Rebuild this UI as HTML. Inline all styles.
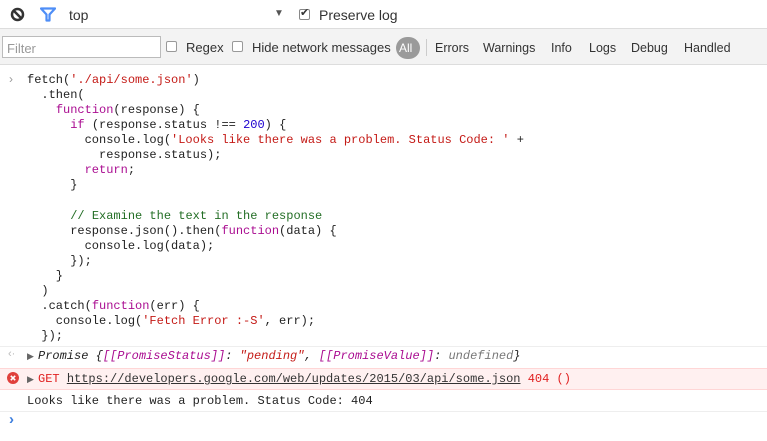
<!DOCTYPE html>
<html><head><meta charset="utf-8"><style>
*{margin:0;padding:0;box-sizing:border-box}
body{width:767px;height:441px;background:#fff;font-family:"Liberation Sans",sans-serif;font-size:13px;color:#333;position:relative;overflow:hidden}
.abs{position:absolute}
#tb1{left:0;top:0;width:767px;height:29px;background:#fff;border-bottom:1px solid #ddd}
#tb2{left:0;top:29px;width:767px;height:36px;background:#f3f3f3;border-bottom:1px solid #ddd}
.t{position:absolute;white-space:nowrap;font-size:13px;color:#333}
.cb{position:absolute;width:11px;height:11px;border:1px solid #999;border-radius:2px;background:#fff}
pre{position:absolute;font-family:"Liberation Mono",monospace;font-size:12px;line-height:15.06px;color:#222;white-space:pre}
.s{color:#c41a16}.k{color:#aa0d91}.n{color:#1c00cf}.c{color:#236e25}
</style></head><body>
<div id="tb1" class="abs"></div>
<svg class="abs" style="left:10px;top:7px" width="15" height="15" viewBox="0 0 15 15"><circle cx="7.5" cy="7.5" r="5.5" fill="none" stroke="#333" stroke-width="2.5"/><line x1="3.8" y1="3.8" x2="11.2" y2="11.2" stroke="#333" stroke-width="2.5"/></svg>
<svg class="abs" style="left:40px;top:7px" width="16" height="15" viewBox="0 0 16 15"><path d="M1 1.5H15L9.5 7.5V13.5H6.5V7.5Z" fill="none" stroke="#4e8ef7" stroke-width="2.2" stroke-linejoin="round"/></svg>
<div class="t" style="left:69px;top:7px;font-size:14px">top</div>
<div class="t" style="left:274px;top:8px;font-size:10px;color:#555">▼</div>
<div class="cb" style="left:299px;top:9px;border-color:#888"></div>
<div class="t" style="left:300px;top:6px;font-size:11px;color:#333">✔</div>
<div class="t" style="left:319px;top:7px;font-size:14px">Preserve log</div>

<div id="tb2" class="abs"></div>
<div class="abs" style="left:2px;top:36px;width:159px;height:22px;background:#fff;border:1px solid #bbb"></div>
<div class="t" style="left:7px;top:41px;color:#999;font-size:13px">Filter</div>
<div class="cb" style="left:166px;top:41px"></div>
<div class="t" style="left:186px;top:40px">Regex</div>
<div class="cb" style="left:232px;top:41px"></div>
<div class="t" style="left:252px;top:40px">Hide network messages</div>
<div class="abs" style="left:396px;top:37px;width:24px;height:22px;border-radius:11px;background:#9a9a9a"></div>
<div class="t" style="left:399px;top:41px;color:#fff;font-size:12px">All</div>
<div class="abs" style="left:426px;top:39px;width:1px;height:17px;background:#ccc"></div>
<div class="t" style="left:435px;top:41px;font-size:12.5px">Errors</div>
<div class="t" style="left:483px;top:41px;font-size:12.5px">Warnings</div>
<div class="t" style="left:551px;top:41px;font-size:12.5px">Info</div>
<div class="t" style="left:589px;top:41px;font-size:12.5px">Logs</div>
<div class="t" style="left:631px;top:41px;font-size:12.5px">Debug</div>
<div class="t" style="left:684px;top:41px;font-size:12.5px">Handled</div>

<div class="t" style="left:9px;top:72px;color:#999;font-size:12px">›</div>
<pre style="left:27px;top:73px">fetch(<span class="s">'./api/some.json'</span>)
  .then(
    <span class="k">function</span>(response) {
      <span class="k">if</span> (response.status !== <span class="n">200</span>) {
        console.log(<span class="s">'Looks like there was a problem. Status Code: '</span> +
          response.status);
        <span class="k">return</span>;
      }

      <span class="c">// Examine the text in the response</span>
      response.json().then(<span class="k">function</span>(data) {
        console.log(data);
      });
    }
  )
  .catch(<span class="k">function</span>(err) {
    console.log(<span class="s">'Fetch Error :-S'</span>, err);
  });</pre>
<div class="abs" style="left:0;top:346px;width:767px;height:1px;background:#eee"></div>
<div class="t" style="left:8px;top:348px;color:#bbb;font-size:11px">‹·</div>
<div class="t" style="left:27px;top:351px;color:#666;font-size:9px">▶</div>
<pre style="left:38px;top:349px;font-style:italic">Promise {<span class="k">[[PromiseStatus]]</span>: <span class="s">"pending"</span>, <span class="k">[[PromiseValue]]</span>: <span style="color:#777">undefined</span>}</pre>
<div class="abs" style="left:0;top:368px;width:767px;height:22px;background:#fff0f0;border-top:1px solid #ffd6d6;border-bottom:1px solid #ffd6d6"></div>
<svg class="abs" style="left:7px;top:372px" width="12" height="12" viewBox="0 0 12 12"><circle cx="6" cy="6" r="6" fill="#e0403c"/><path d="M3.8 3.8L8.2 8.2M8.2 3.8L3.8 8.2" stroke="#fff" stroke-width="1.6"/></svg>
<div class="t" style="left:27px;top:374px;color:#666;font-size:9px">▶</div>
<pre style="left:38px;top:372px;color:#e02020">GET <span style="color:#333;text-decoration:underline">https://developers.google.com/web/updates/2015/03/api/some.json</span> 404 ()</pre>
<pre style="left:27px;top:394px">Looks like there was a problem. Status Code: 404</pre>
<div class="abs" style="left:0;top:411px;width:767px;height:1px;background:#eee"></div>
<div class="t" style="left:9px;top:411px;color:#3b7ddd;font-size:15px;font-weight:bold">›</div>
</body></html>
